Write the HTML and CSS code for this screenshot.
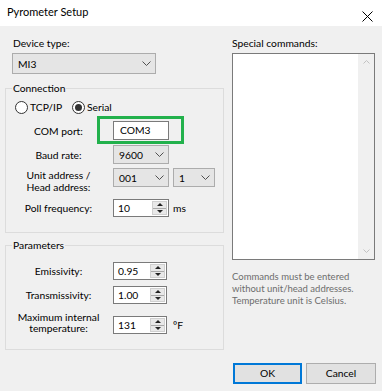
FILE: index.html
```html
<!DOCTYPE html>
<html>
<head>
<meta charset="utf-8">
<title>Pyrometer Setup</title>
<link rel="stylesheet" href="styles.css">
</head>
<body>
<div class="window">
  <div class="titlebar">
    <span class="title">Pyrometer Setup</span>
    <svg class="close" width="11" height="11" viewBox="0 0 11 11"><path d="M0.5 0.5 L10.5 10.5 M10.5 0.5 L0.5 10.5" stroke="#000" stroke-width="1" fill="none"/></svg>
  </div>
  <div class="client">
    <div class="columns">
      <div class="left">
        <div class="top-lbl">Device type:</div>
        <div class="combo w-device"><span>MI3</span><svg class="chev" width="9" height="5" viewBox="0 0 9 5"><path d="M0.5 0.5 L4.5 4.5 L8.5 0.5" fill="none" stroke="#505050"/></svg></div>

        <div class="group conn">
          <div class="group-title">Connection</div>
          <div class="radios">
            <label class="radio"><span class="circle"></span>TCP/IP</label>
            <label class="radio"><span class="circle checked"></span>Serial</label>
          </div>
          <div class="row r-com">
            <div class="rl">COM port:</div>
            <div class="ctrls"><div class="textbox w56 highlight">COM3</div></div>
          </div>
          <div class="row r-baud">
            <div class="rl">Baud rate:</div>
            <div class="ctrls"><div class="combo w56"><span>9600</span><svg class="chev" width="9" height="5" viewBox="0 0 9 5"><path d="M0.5 0.5 L4.5 4.5 L8.5 0.5" fill="none" stroke="#505050"/></svg></div></div>
          </div>
          <div class="row r-unit">
            <div class="rl two"><span>Unit address /</span><span>Head address:</span></div>
            <div class="ctrls">
              <div class="combo w56"><span>001</span><svg class="chev" width="9" height="5" viewBox="0 0 9 5"><path d="M0.5 0.5 L4.5 4.5 L8.5 0.5" fill="none" stroke="#505050"/></svg></div>
              <div class="combo w42"><span>1</span><svg class="chev" width="9" height="5" viewBox="0 0 9 5"><path d="M0.5 0.5 L4.5 4.5 L8.5 0.5" fill="none" stroke="#505050"/></svg></div>
            </div>
          </div>
          <div class="row r-poll">
            <div class="rl">Poll frequency:</div>
            <div class="ctrls">
              <div class="spinner w56"><span class="val">10</span><span class="spin"><span class="up"></span><span class="down"></span></span></div>
              <span class="unit">ms</span>
            </div>
          </div>
        </div>

        <div class="group params">
          <div class="group-title">Parameters</div>
          <div class="row r-emis">
            <div class="rl">Emissivity:</div>
            <div class="ctrls">
              <div class="spinner w54"><span class="val">0.95</span><span class="spin"><span class="up"></span><span class="down"></span></span></div>
            </div>
          </div>
          <div class="row r-trans">
            <div class="rl">Transmissivity:</div>
            <div class="ctrls">
              <div class="spinner w54"><span class="val">1.00</span><span class="spin"><span class="up"></span><span class="down"></span></span></div>
            </div>
          </div>
          <div class="row r-max">
            <div class="rl two tight"><span>Maximum internal</span><span>temperature:</span></div>
            <div class="ctrls">
              <div class="spinner w54"><span class="val">131</span><span class="spin"><span class="up"></span><span class="down"></span></span></div>
              <span class="unit unit-f">ºF</span>
            </div>
          </div>
        </div>
      </div>

      <div class="right">
        <div class="top-lbl">Special commands:</div>
        <div class="memo">
          <div class="memo-area"></div>
          <div class="vscroll">
            <svg width="7" height="4" viewBox="0 0 7 4"><path d="M0.5 3.5 L3.5 0.5 L6.5 3.5" fill="none" stroke="#c2c2c2"/></svg>
            <svg width="7" height="4" viewBox="0 0 7 4"><path d="M0.5 0.5 L3.5 3.5 L6.5 0.5" fill="none" stroke="#c2c2c2"/></svg>
          </div>
        </div>
        <p class="help">Commands must be entered<br>without unit/head addresses.<br>Temperature unit is Celsius.</p>
      </div>
    </div>
    <div class="footer">
      <button class="btn default">OK</button>
      <button class="btn">Cancel</button>
    </div>
  </div>
</div>
</body>
</html>
```
FILE: styles.css
```css
* { box-sizing: border-box; }
html, body { margin: 0; padding: 0; }
body {
  width: 382px;
  height: 391px;
  overflow: hidden;
  font-family: Lato, "Noto Sans", sans-serif;
  font-size: 10.3px;
  color: #000;
  background: #f0f0f0;
}
.window { width: 382px; height: 391px; display: flex; flex-direction: column; }

.titlebar {
  height: 26px;
  background: #fff;
  display: flex;
  align-items: flex-start;
  justify-content: space-between;
  padding: 5px 9px 0 7px;
}
.title { font-size: 11px; line-height: 14px; }
.close { margin-top: 6px; }

.client { flex: 1; background: #f0f0f0; display: flex; flex-direction: column; }
.columns { display: flex; height: 324px; }
.left { width: 218px; margin-left: 5px; padding-top: 10px; }
.right { width: 143px; margin-left: 9px; padding-top: 10px; }

.top-lbl { line-height: 14px; height: 14px; padding-left: 8px; }
.right .top-lbl { padding-left: 0; }

.combo {
  height: 19px;
  background: #e5e5e5;
  border: 1px solid #acacac;
  display: flex;
  align-items: center;
  justify-content: space-between;
  padding: 0 4px 0 5px;
  line-height: 14px;
}
.combo .chev { flex: none; }
.w-device { width: 144px; height: 21px; margin: 3px 0 0 7px; }
.w56 { width: 56px; }
.w54 { width: 54px; }
.w42 { width: 42px; }

.group {
  border: 1px solid #dcdcdc;
  width: 219px;
}
.conn { margin-top: 14px; height: 145px; }
.params { margin-top: 12px; height: 105px; }
.group-title {
  margin: -8px 0 0 6px;
  padding: 0 1px;
  width: fit-content;
  line-height: 14px;
  height: 14px;
  background: #f0f0f0;
}

.radios { display: flex; margin: 6px 0 0 9px; height: 13px; }
.radio { display: flex; align-items: center; width: 57px; line-height: 13px; gap: 2px; }
.circle {
  width: 13px; height: 13px;
  border: 1px solid #333;
  border-radius: 50%;
  background: #fff;
  flex: none;
  display: flex; align-items: center; justify-content: center;
}
.circle.checked::after {
  content: "";
  width: 7px; height: 7px;
  border-radius: 50%;
  background: #333;
}

.row {
  display: grid;
  grid-template-columns: 81px auto;
  column-gap: 14px;
  padding-left: 12px;
  align-items: center;
}
.rl {
  display: flex;
  flex-direction: column;
  align-items: center;
  white-space: nowrap;
  line-height: 14px;
}
.rl.two { line-height: 12px; margin-top: 1px; }
.rl.tight { line-height: 11px; margin-top: 0; }
.ctrls { display: flex; align-items: center; gap: 4px; }

.r-com { margin-top: 7px; height: 19px; }
.r-baud { margin-top: 5px; height: 19px; }
.r-unit { margin-top: 4px; height: 25px; align-items: start; }
.r-poll { margin-top: 6px; height: 18px; }
.r-emis { margin-top: 10px; height: 18px; }
.r-trans { margin-top: 6px; height: 18px; }
.r-max { margin-top: 8px; height: 23px; align-items: start; }
.r-max .ctrls { margin-top: 4px; }

.textbox {
  height: 19px;
  background: #fff;
  border: 1px solid #7a7a7a;
  padding-left: 6px;
  line-height: 17px;
}
.highlight { position: relative; }
.highlight::after {
  content: "";
  position: absolute;
  left: -17px; right: -16px; top: -6px; bottom: -5px;
  border: 3px solid #22b14c;
}

.spinner {
  height: 18px;
  background: #fff;
  border: 1px solid #7a7a7a;
  display: flex;
  justify-content: space-between;
  line-height: 16px;
}
.spinner .val { padding-left: 4px; }
.spin {
  width: 15px;
  margin: 1px 1px 1px 0;
  display: flex;
  flex-direction: column;
  background: #e8e8e8;
  border: 1px solid #cfcfcf;
}
.spin .up, .spin .down {
  flex: 1;
  display: flex; align-items: center; justify-content: center;
}
.spin .up { border-bottom: 1px solid #a8a8a8; }
.spin .up::after {
  content: "";
  border-left: 3px solid transparent;
  border-right: 3px solid transparent;
  border-bottom: 3px solid #222;
}
.spin .down::after {
  content: "";
  border-left: 3px solid transparent;
  border-right: 3px solid transparent;
  border-top: 3px solid #222;
}
.unit { line-height: 14px; }
.unit-f { margin-left: 2px; }

.memo {
  margin-top: 3px;
  height: 207px;
  border: 1px solid #7a7a7a;
  background: #fff;
  display: flex;
}
.memo-area { flex: 1; }
.vscroll {
  width: 16px;
  background: #f0f0f0;
  display: flex;
  flex-direction: column;
  justify-content: space-between;
  align-items: center;
  padding: 6px 0 6px;
}
.help {
  margin: 11px 0 0;
  font-size: 9.5px;
  line-height: 12px;
  color: #6d6d6d;
}

.footer {
  display: flex;
  justify-content: flex-end;
  gap: 4px;
  padding: 13px 6px 0 0;
}
.btn {
  font: inherit;
  color: #000;
  height: 21px;
  width: 70px;
  background: #e1e1e1;
  border: 1px solid #adadad;
  padding: 0;
  line-height: 17px;
}
.btn.default { width: 69px; border: 2px solid #0078d7; }
```
